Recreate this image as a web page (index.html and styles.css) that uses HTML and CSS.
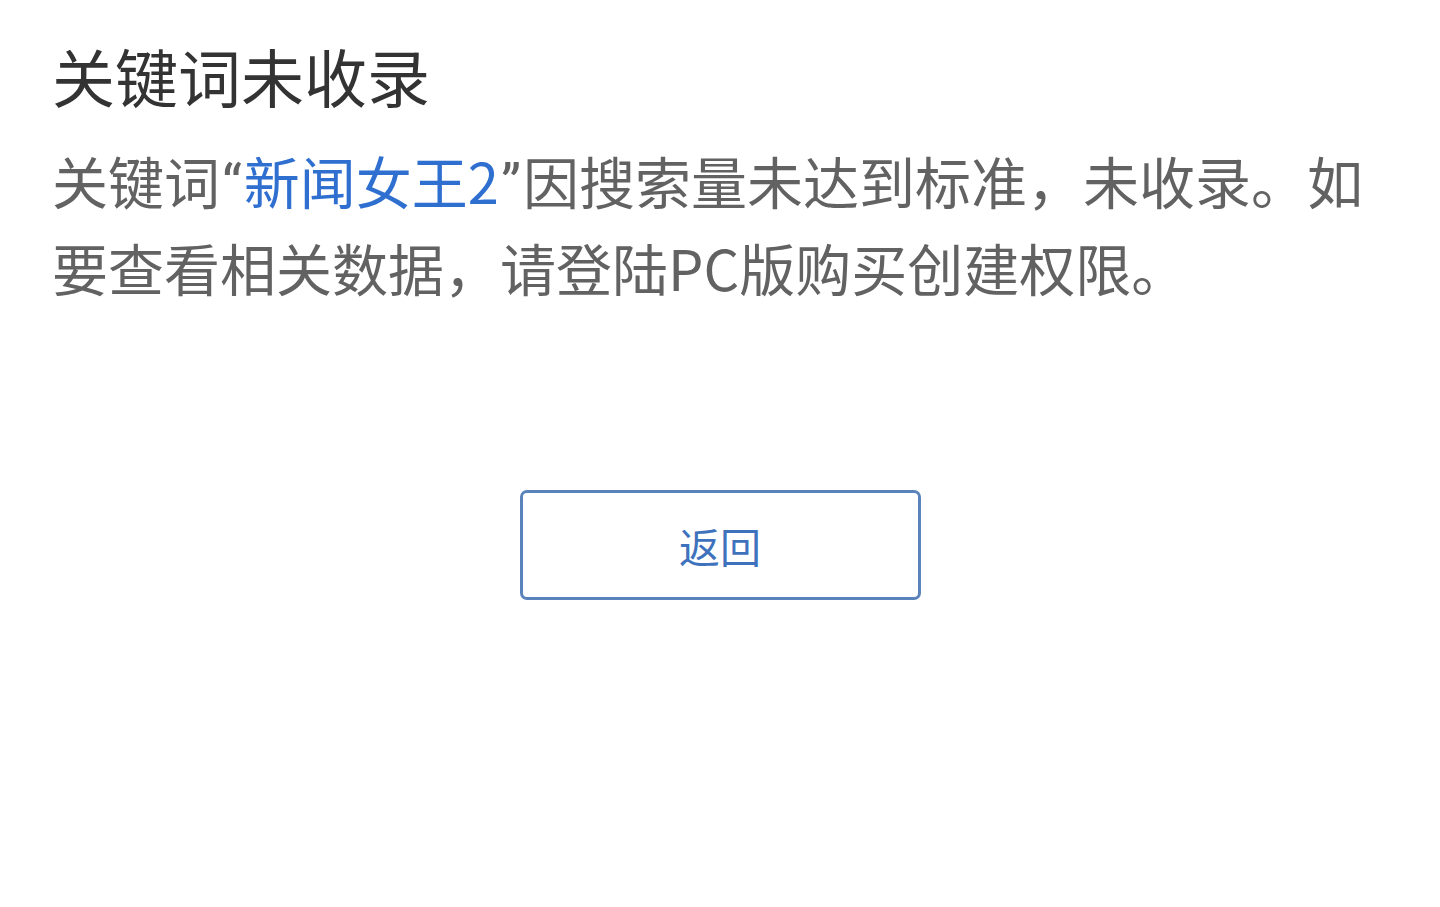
FILE: index.html
```html
<!DOCTYPE html>
<html lang="zh-CN">
<head>
<meta charset="utf-8">
<title>关键词未收录</title>
<link rel="stylesheet" href="styles.css">
</head>
<body>
<main class="page">
  <h1 class="title">关键词未收录</h1>
  <p class="desc">关键词<span class="q">“</span><span class="kw">新闻女王2</span><span class="q">”</span>因搜索量未达到标准，未收录。如要查看相关数据，请登陆PC版购买创建权限。</p>
  <div class="actions">
    <button class="back" type="button">返回</button>
  </div>
</main>
</body>
</html>
```

FILE: styles.css
```css
html, body {
  margin: 0;
  padding: 0;
  background: #ffffff;
}
body {
  font-family: "Noto Sans CJK SC", "Noto Sans", sans-serif;
}
.page {
  padding: 31px 52px 0 52px;
}
.title {
  margin: 0;
  font-size: 63px;
  font-weight: 400;
  line-height: 88px;
  color: #333333;
}
.desc {
  margin: 17px 0 0 0;
  font-size: 56px;
  line-height: 87px;
  color: #626262;
}
.q {
  font-family: "Roboto", "Noto Sans", sans-serif;
  line-height: 1;
  margin: 0 2px;
}
.kw {
  color: #2f6fd0;
}
.actions {
  display: flex;
  justify-content: center;
  margin-top: 180px;
}
.back {
  width: 401px;
  height: 110px;
  border: 3px solid #5a83bb;
  border-radius: 7px;
  background: #ffffff;
  color: #3f72bd;
  font-family: "Noto Sans CJK SC", sans-serif;
  font-size: 41px;
  padding: 0;
}
```
